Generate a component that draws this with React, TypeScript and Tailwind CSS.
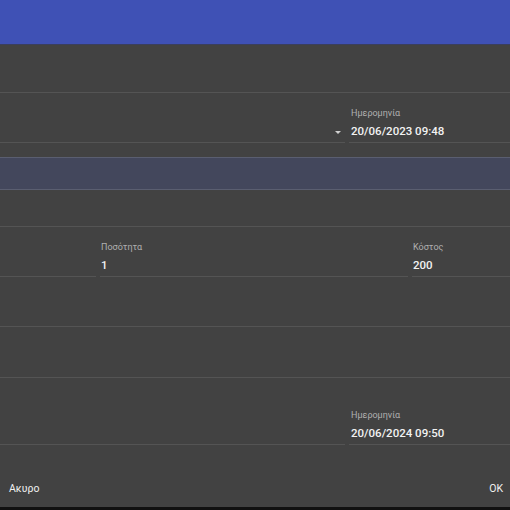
import React from "react";

const font = { fontFamily: "Roboto, 'Noto Sans', sans-serif" };

function Field({ label, value, className = "", arrow = false }: { label?: string; value?: string; className?: string; arrow?: boolean }) {
  return (
    <div className={`flex flex-col justify-end border-b border-[#545454] h-full ${className}`}>
      {label && <div className="text-[9px] leading-[11px] text-[#b0b0b0] mb-[4px]">{label}</div>}
      <div className="flex items-center h-[18px] mb-[1px] text-[11.5px] font-medium text-[#f2f2f2]">
        {value}
        {arrow && <span className="ml-auto mr-[4px] w-0 h-0 border-l-[3.5px] border-r-[3.5px] border-t-[3.5px] border-l-transparent border-r-transparent border-t-[#d0d0d0]" />}
      </div>
    </div>
  );
}

export default function App() {
  return (
    <div className="w-[510px] h-[510px] bg-[#424242] flex flex-col overflow-hidden" style={font}>
      <div className="h-[44px] bg-[#3f51b5] shrink-0" />
      <div className="h-[1px] bg-[#3a3f5e] shrink-0" />
      <div className="h-[48px] border-b border-[#545454] shrink-0" />
      <div className="h-[50px] flex gap-[4px] shrink-0">
        <Field className="flex-1" arrow />
        <Field className="w-[161px] pl-[2px]" label="Ημερομηνία" value="20/06/2023 09:48" />
      </div>
      <div className="h-[14px] shrink-0" />
      <div className="h-[33px] bg-[#43475c] border-t border-b border-[#5a5e70] shrink-0" />
      <div className="h-[37px] border-b border-[#545454] shrink-0" />
      <div className="h-[50px] flex gap-[4px] shrink-0">
        <Field className="w-[96px]" />
        <Field className="w-[308px] pl-[1px]" label="Ποσότητα" value="1" />
        <Field className="flex-1 pl-[1px]" label="Κόστος" value="200" />
      </div>
      <div className="h-[50px] border-b border-[#545454] shrink-0" />
      <div className="h-[51px] border-b border-[#545454] shrink-0" />
      <div className="h-[67px] flex gap-[4px] shrink-0">
        <Field className="flex-1" />
        <Field className="w-[161px] pl-[2px]" label="Ημερομηνία" value="20/06/2024 09:50" />
      </div>
      <div className="h-[62px] flex items-center justify-between px-[9px] pt-[25px] shrink-0 text-[10.5px] text-[#f0f0f0]">
        <span>Ακυρο</span>
        <span className="mr-[-2px]">OK</span>
      </div>
      <div className="flex-1 bg-[#111111]" />
    </div>
  );
}
